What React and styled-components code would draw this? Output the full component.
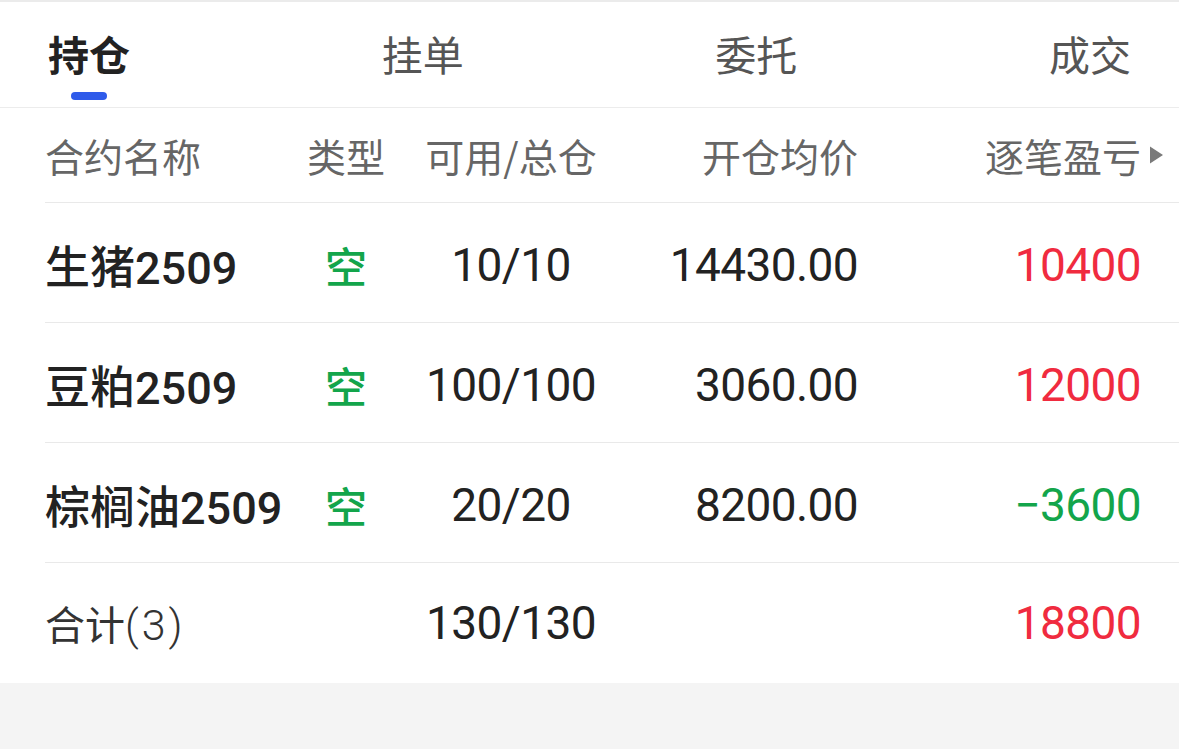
import React from "react";
import styled, { createGlobalStyle } from "styled-components";

const Global = createGlobalStyle`
  html, body { margin: 0; padding: 0; background: #f4f4f4; }
  body { font-family: "Noto Sans CJK SC", "Noto Sans", sans-serif; }
`;

const Page = styled.div`
  width: 1179px;
  min-height: 749px;
  background: #f4f4f4;
`;

const Panel = styled.div`
  background: #ffffff;
  border-top: 2px solid #ebebeb;
`;

const TabBar = styled.div`
  display: flex;
  justify-content: space-between;
  padding: 0 48px;
  height: 105px;
  border-bottom: 1px solid #ececec;
`;

const Tab = styled.div`
  display: flex;
  flex-direction: column;
  align-items: center;
  padding-top: 24px;
`;

const TabLabel = styled.span`
  font-family: "Noto Sans CJK SC", sans-serif;
  font-size: 41px;
  line-height: 54px;
  font-weight: ${(p) => (p.$active ? 700 : 400)};
  color: ${(p) => (p.$active ? "#222222" : "#555555")};
`;

const Indicator = styled.span`
  margin-top: 12px;
  width: 36px;
  height: 8px;
  border-radius: 4px;
  background: ${(p) => (p.$active ? "#2f5bea" : "transparent")};
`;

const Row = styled.div`
  display: grid;
  grid-template-columns: 255px 92px 238px 228px 1fr;
  align-items: center;
  margin-left: 45px;
  padding-right: 38px;
  height: ${(p) => p.$h}px;
  padding-top: ${(p) => p.$pt || 0}px;
  box-sizing: border-box;
  border-bottom: ${(p) => (p.$noBorder ? "none" : "1.5px solid #e9e9e9")};
`;

const HeadCell = styled.div`
  font-family: "Noto Sans CJK SC", sans-serif;
  font-size: 39px;
  color: #666666;
  text-align: ${(p) => p.$align || "left"};
  white-space: nowrap;
`;

const HeadLast = styled.div`
  display: flex;
  justify-content: flex-end;
  align-items: center;
  margin-right: -24px;
`;

const Arrow = styled.svg`
  margin-left: 6px;
  flex: none;
`;

const NameCell = styled.div`
  font-family: Roboto, "Noto Sans CJK SC", sans-serif;
  font-size: 45px;
  font-weight: 500;
  color: #222222;
  white-space: nowrap;
`;

const TotalLabel = styled.div`
  font-family: "Noto Sans CJK SC", sans-serif;
  font-size: 40px;
  color: #333333;
  white-space: nowrap;
`;

const Paren = styled.span`
  font-family: Roboto, sans-serif;
  font-size: 43px;
  font-weight: 300;
  letter-spacing: 3px;
`;

const TypeCell = styled.div`
  font-family: "Noto Sans CJK SC", sans-serif;
  font-size: 42px;
  font-weight: 500;
  color: #13a54b;
  text-align: center;
`;

const Num = styled.div`
  font-family: Roboto, "DejaVu Sans", sans-serif;
  font-size: 46px;
  font-weight: 400;
  letter-spacing: -0.6px;
  color: ${(p) => p.$color || "#222222"};
  text-align: ${(p) => p.$align || "right"};
  white-space: nowrap;
`;

const colorFor = (v) => (v < 0 ? "#13a54b" : "#f02b3f");

const rows = [
  { name: "生猪2509", type: "空", qty: "10/10", price: "14430.00", pnl: 10400 },
  { name: "豆粕2509", type: "空", qty: "100/100", price: "3060.00", pnl: 12000 },
  { name: "棕榈油2509", type: "空", qty: "20/20", price: "8200.00", pnl: -3600 },
];

const tabs = ["持仓", "挂单", "委托", "成交"];

export default function App() {
  return (
    <Page>
      <Global />
      <Panel>
        <TabBar>
          {tabs.map((t, i) => (
            <Tab key={t}>
              <TabLabel $active={i === 0}>{t}</TabLabel>
              <Indicator $active={i === 0} />
            </Tab>
          ))}
        </TabBar>
        <Row $h={95}>
          <HeadCell>合约名称</HeadCell>
          <HeadCell $align="center">类型</HeadCell>
          <HeadCell $align="center">可用/总仓</HeadCell>
          <HeadCell $align="right">开仓均价</HeadCell>
          <HeadLast>
            <HeadCell $align="right">逐笔盈亏</HeadCell>
            <Arrow width="18" height="20" viewBox="0 0 18 20">
              <path d="M3 1.5 L16 10 L3 18.5 Z" fill="#7a7a7a" />
            </Arrow>
          </HeadLast>
        </Row>
        {rows.map((r) => (
          <Row key={r.name} $h={120} $pt={4}>
            <NameCell>{r.name}</NameCell>
            <TypeCell>{r.type}</TypeCell>
            <Num $align="center">{r.qty}</Num>
            <Num>{r.price}</Num>
            <Num $color={colorFor(r.pnl)}>{r.pnl < 0 ? "−" + Math.abs(r.pnl) : r.pnl}</Num>
          </Row>
        ))}
        <Row $h={120} $noBorder>
          <TotalLabel>
            合计<Paren>(3)</Paren>
          </TotalLabel>
          <div />
          <Num $align="center">130/130</Num>
          <div />
          <Num $color="#f02b3f">18800</Num>
        </Row>
      </Panel>
    </Page>
  );
}
